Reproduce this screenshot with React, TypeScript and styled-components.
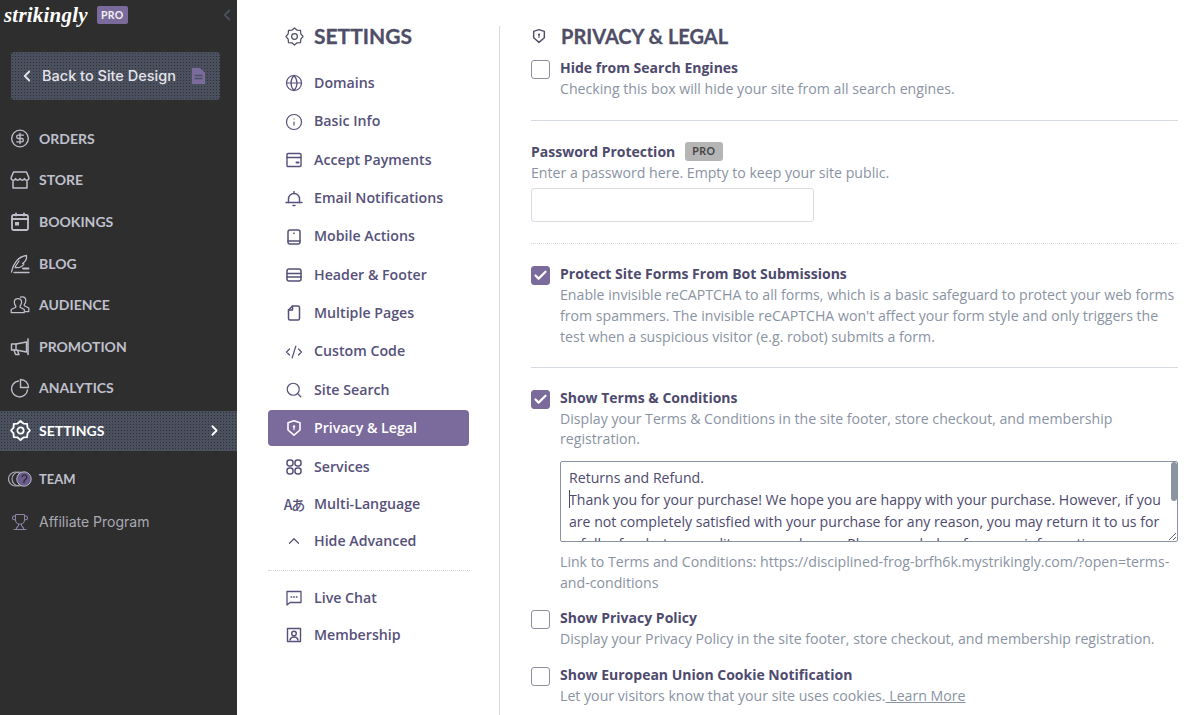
import React from "react";
import styled, { createGlobalStyle } from "styled-components";
import { ChevronLeft, ChevronRight, ChevronUp, CircleDollarSign, Trophy, Globe, Info, CodeXml, Search, Check } from "lucide-react";

const Global = createGlobalStyle`
  html, body { margin: 0; padding: 0; height: 100%; background: #fff; }
  body { font-family: "Open Sans", "Liberation Sans", sans-serif; overflow: hidden; }
  * { box-sizing: border-box; }
`;

const dots = `
  background-color: #4b505e;
  background-image: radial-gradient(#2f3138 0.6px, transparent 0.8px);
  background-size: 3px 3px;
`;

const Page = styled.div`display: flex; width: 1200px; height: 715px; overflow: hidden;`;
const Sidebar = styled.aside`width: 237px; flex: none; background: #2e2e2e; display: flex; flex-direction: column;`;
const LogoRow = styled.div`height: 52px; padding: 0 1px 22px 4px; display: flex; align-items: center; gap: 8px;`;
const Logo = styled.span`font: italic 700 21px/1 "Liberation Serif", serif; color: #fff; width: 85px; letter-spacing: 0.2px;`;
const ProTag = styled.span`background: #7b6b9d; color: #f0f0f0; font: 700 10.5px/1 "Lato", sans-serif; padding: 4px 4px; border-radius: 2px; letter-spacing: .3px;`;
const Collapse = styled.span`margin-left: auto; color: #4b505e; display: flex;`;
const BackButton = styled.div`
  ${dots}
  margin: 0 17px 0 11px; height: 48px; border-radius: 3px; display: flex; align-items: center;
  padding: 0 14px 0 7px; color: #e4e4ea; font: 500 14.5px/1 "Inter", sans-serif; gap: 6px;
  svg:last-child { margin-left: auto; color: #7b6b9d; }
`;
const MainNav = styled.nav`display: flex; flex-direction: column; margin-top: 18px;`;
const NavRow = styled.div<{ $active?: boolean }>`
  ${(p) => (p.$active ? dots : "")}
  height: ${(p) => (p.$active ? "40px" : "41.6px")};
  margin-top: ${(p) => (p.$active ? "1.4px" : "0")};
  display: flex; align-items: center; padding: 0 14px 0 10px; gap: 9px;
  color: ${(p) => (p.$active ? "#fff" : "#bfc0cc")};
  font: 700 14px/1 "Lato", sans-serif;
  svg:last-child:not(:first-child) { margin-left: auto; }
`;
const IconSlot = styled.span`width: 20px; display: flex; justify-content: center; flex: none;`;
const TeamRow = styled(NavRow)`margin-top: 8px; padding-left: 8px; gap: 7px; font-size: 13px;`;
const AffiliateRow = styled(NavRow)`font: 400 14px/1 "Inter", sans-serif; color: #a9a9b3; margin-top: 1px;`;

const SettingsCol = styled.div`
  width: 263px; flex: none; padding: 0 30px 0 31px; margin: 26px 0 0; border-right: 1px solid #d9d9de;
  display: flex; flex-direction: column;
`;
const SettingsTitle = styled.h2`
  margin: 0 0 19.2px; height: 20px; padding-left: 17px; display: flex; align-items: center; gap: 10px;
  font: 700 21px/20px "Lato", sans-serif; color: #4e4e68; -webkit-text-stroke: 0.3px #4e4e68;
`;
const SubNav = styled.nav`display: flex; flex-direction: column;`;
const SubRow = styled.div<{ $active?: boolean; $tight?: boolean }>`
  height: 36px; margin-bottom: ${(p) => (p.$tight ? "1px" : "2.35px")}; display: flex; align-items: center; gap: 10px; padding-left: 16px; border-radius: 4px;
  font: 600 14.2px/1 "Open Sans", sans-serif;
  background: ${(p) => (p.$active ? "#7b6b9d" : "transparent")};
  color: ${(p) => (p.$active ? "#fff" : "#56517a")};
`;
const LangGlyph = styled.span`font: 500 14px/1 "Noto Sans CJK JP", "Noto Sans", sans-serif; letter-spacing: -1px; white-space: nowrap;`;
const SubDivider = styled.div`border-top: 1px dotted #cfcfd4; margin: 10px -1px 9.5px 0;`;

const Content = styled.main`flex: 1; padding: 26px 22px 0 31px;`;
const ContentTitle = styled.h2`
  margin: 0 0 12px; height: 20px; display: flex; align-items: center; gap: 14px;
  font: 700 20px/20px "Lato", sans-serif; color: #4e4e68; -webkit-text-stroke: 0.3px #4e4e68;
`;
const OptionRow = styled.div<{ $top?: number }>`display: flex; gap: 10px; margin-top: ${(p) => p.$top ?? 0}px;`;
const Box = styled.span<{ $on?: boolean }>`
  width: 19px; height: 19px; margin-top: 2px; flex: none; border-radius: 3px; display: flex; align-items: center; justify-content: center; color: #fff;
  border: 1.5px solid ${(p) => (p.$on ? "#7b6b9d" : "#8f8f9d")};
  background: ${(p) => (p.$on ? "#7b6b9d" : "#fff")};
`;
const OptionBody = styled.div`flex: 1; min-width: 0;`;
const Title = styled.div`font: 700 14px/20px "Open Sans", sans-serif; color: #4e4a6e; margin-bottom: 1px;`;
const Desc = styled.div`font: 400 14.15px/20.7px "Open Sans", sans-serif; color: #8a93a3;`;
const LearnMore = styled.span`text-decoration: underline;`;
const Rule = styled.hr<{ $dotted?: boolean; $top: number; $bottom: number }>`
  border: 0; border-top: 1px ${(p) => (p.$dotted ? "dotted" : "solid")} #d5dae0;
  margin: ${(p) => p.$top}px 0 ${(p) => p.$bottom}px;
`;
const PassTitle = styled(Title)`display: flex; align-items: center; gap: 10px;`;
const GreyTag = styled.span`background: #b5b5b5; color: #444; font: 700 10.5px/1 "Lato", sans-serif; letter-spacing: .6px; padding: 4.5px 7px; border-radius: 3px;`;
const PassInput = styled.input`
  display: block; width: 283px; height: 34px; margin-top: 5px; border: 1.5px solid #d9dde2; border-radius: 3px; background: #fff; outline: none;
`;
const TermsWrap = styled.div`position: relative; margin: 11px 0 10px; width: 618px;`;
const Terms = styled.textarea`
  display: block; width: 618px; height: 81px; padding: 5px 15px 5px 8px; border: 1px solid #8993a0; border-radius: 2px; outline: none;
  resize: both; overflow: hidden; color: #4e4a6e;
  font: 400 14.12px/22px "Open Sans", sans-serif;
`;
const Caret = styled.span`position: absolute; left: 9px; top: 29px; width: 1px; height: 18px; background: #4e4a6e;`;
const Thumb = styled.span`position: absolute; right: 1px; top: 1px; width: 6px; height: 39px; background: #8b94a0; border-radius: 3px;`;

const gearPath = (() => {
  const pts: string[] = [];
  for (let i = 0; i < 16; i++) {
    const a = (i * Math.PI) / 8 - Math.PI / 2;
    const r = i % 2 === 0 ? 9 : 7.2;
    pts.push(`${(10 + r * Math.cos(a)).toFixed(2)} ${(10 + r * Math.sin(a)).toFixed(2)}`);
  }
  return "M" + pts.join("L") + "Z";
})();

type P = { size?: number; sw?: number };
const Svg = styled.svg`fill: none; stroke: currentColor; stroke-linejoin: round; stroke-linecap: round; flex: none;`;

const Gear = ({ size = 20, sw = 1.6 }: P) => (
  <Svg width={size} height={size} viewBox="0 0 20 20" strokeWidth={sw}><path d={gearPath} /><circle cx="10" cy="10" r="3" /></Svg>
);
const StoreIcon = () => (
  <Svg width="20" height="20" viewBox="0 0 20 20" strokeWidth={1.5}>
    <path d="M3.5 2h13L19 8a2.3 2.3 0 0 1-4.5.6 2.4 2.4 0 0 1-4.5 0 2.4 2.4 0 0 1-4.5 0A2.3 2.3 0 0 1 1 8z" /><path d="M3 11.5V18h14v-6.5" />
  </Svg>
);
const BookingsIcon = () => (
  <Svg width="20" height="20" viewBox="0 0 20 20" strokeWidth={1.8}>
    <rect x="2" y="3" width="16" height="15" rx="1.5" /><path d="M2 7h16M6 1.5v2M14 1.5v2" /><rect x="5" y="10" width="4" height="3.5" fill="currentColor" stroke="none" />
  </Svg>
);
const BlogIcon = () => (
  <Svg width="20" height="20" viewBox="0 0 20 20" strokeWidth={1.3}>
    <path d="M1.5 18C3 10 8 2.5 16.5 1.5 17 5 15 8 12.5 9.5L14 10c-2 3-5 4-8.5 3.5" /><path d="M5 13 9 7" /><path d="M4 18.5h15" /><path d="M13 14.5h5.5" strokeWidth={1.8} />
  </Svg>
);
const AudienceIcon = () => (
  <Svg width="20" height="20" viewBox="0 0 20 20" strokeWidth={1.25}>
    <path d="M8 3.5c2.2 0 3.6 1.700 3.6 3.800 0 1.700-.8 2.900-1.500 3.700v1.300l4.200 2.200v3H1.200v-3l4.600-2.200v-1.300C5 10.200 4.300 9 4.300 7.300 4.300 5.200 5.800 3.500 8 3.500z" />
    <path d="M10.500 2.200C11 2 11.600 1.900 12.200 1.900c2.200 0 3.600 1.700 3.600 3.800 0 1.700-.8 2.900-1.500 3.700v1.300l4.500 2.300v3.500h-3.500" />
  </Svg>
);
const PromotionIcon = () => (
  <Svg width="20" height="20" viewBox="0 0 20 20" strokeWidth={1.4}>
    <path d="M16.500 5 6 7H1.500v6H6l10.500 2z" /><path d="M18 2v15.500" strokeWidth={1.6} /><path d="M4 13l1.500 4.500H9L7.500 13.500" /><path d="M6 7v6" />
  </Svg>
);
const AnalyticsIcon = () => (
  <Svg width="20" height="20" viewBox="0 0 20 20" strokeWidth={1.4}>
    <path d="M8.500 3A8 8 0 1 0 17.500 12" /><path d="M10.500 1.500A8 8 0 0 1 18.500 9.500H10.500z" />
  </Svg>
);
const DocIcon = () => (
  <svg width="16" height="18" viewBox="0 0 16 18" fill="currentColor">
    <path d="M2 1h8l5 4.500V17H2z" /><path d="M4.500 8.500h8M4.500 11.500h8" stroke="#4b505e" strokeWidth="1.300" />
  </svg>
);
const TeamIcon = () => (
  <svg width="24" height="16" viewBox="0 0 24 16">
    <circle cx="7.500" cy="8" r="7" fill="none" stroke="#a9a9b8" strokeWidth="1.200" />
    <circle cx="11" cy="8" r="7" fill="none" stroke="#a9a9b8" strokeWidth="1.200" />
    <circle cx="16" cy="8" r="7.200" fill="#6a5c8c" stroke="#b9b9c6" strokeWidth="1" />
    <path d="M14 6a2.400 2.400 0 1 1 3.400 2.400L16 10v2" stroke="#2e2e2e" strokeWidth="1.300" fill="none" />
  </svg>
);

const Wallet = () => (
  <Svg width="18" height="18" viewBox="0 0 18 18" strokeWidth={1.4}>
    <rect x="2" y="2.500" width="14" height="13" rx="1" /><path d="M2 6.500h14" /><path d="M11.500 11.500h2" strokeWidth={2} />
  </Svg>
);
const BellIcon = () => (
  <Svg width="18" height="18" viewBox="0 0 18 18" strokeWidth={1.4}>
    <path d="M3.500 13.500V10a5.500 5.500 0 0 1 11 0v3.500" /><path d="M1 13.500h16" /><path d="M8 16.500h2M9 2.500v2" />
  </Svg>
);
const Phone = () => (
  <Svg width="18" height="18" viewBox="0 0 18 18" strokeWidth={1.5}>
    <rect x="3" y="2" width="12" height="14" rx="2" /><path d="M3 13h12" /><path d="M9 5v.6" />
  </Svg>
);
const HeaderFooter = () => (
  <Svg width="18" height="18" viewBox="0 0 18 18" strokeWidth={1.5}>
    <rect x="2" y="3" width="14" height="12" rx="2" /><path d="M2 7.500h14M2 11h14" />
  </Svg>
);
const PageIcon = () => (
  <Svg width="18" height="18" viewBox="0 0 18 18" strokeWidth={1.5}>
    <path d="M7.500 2H13a1.500 1.500 0 0 1 1.500 1.500v11A1.500 1.500 0 0 1 13 16H5a1.500 1.500 0 0 1-1.500-1.500V6z" /><path d="M7.500 2v4h-4" />
  </Svg>
);
const Shield = ({ size = 18 }: { size?: number }) => (
  <Svg width={size} height={size} viewBox="0 0 18 18" strokeWidth={1.6}>
    <path d="M9 1.800l6 2v7.200L9 16.200 3 11V3.800z" /><circle cx="9" cy="7.400" r="1.200" fill="currentColor" stroke="none" /><path d="M9 8v2.600" strokeWidth={1.200} />
  </Svg>
);
const Squares = () => (
  <Svg width="18" height="18" viewBox="0 0 18 18" strokeWidth={1.5}>
    <rect x="2" y="2" width="6" height="6" rx="2.400" /><rect x="10" y="2" width="6" height="6" rx="2.400" />
    <rect x="2" y="10" width="6" height="6" rx="2.400" /><rect x="10" y="10" width="6" height="6" rx="2.400" />
  </Svg>
);
const ChatIcon = () => (
  <Svg width="18" height="18" viewBox="0 0 18 18" strokeWidth={1.3}>
    <path d="M2 2.500h14v11H5L2 16z" /><path d="M6 8h.6M8.700 8h.6M11.400 8h.6" strokeWidth={1.500} />
  </Svg>
);
const MemberIcon = () => (
  <Svg width="18" height="18" viewBox="0 0 18 18" strokeWidth={1.400}>
    <rect x="2.500" y="2.500" width="13" height="13" /><circle cx="9" cy="7.500" r="2.300" /><path d="M5 14c.5-2.300 2-3 4-3s3.500.7 4 3" />
  </Svg>
);

const mainItems = [
  { label: "ORDERS", icon: <CircleDollarSign size={21} strokeWidth={1.6} /> },
  { label: "STORE", icon: <StoreIcon /> },
  { label: "BOOKINGS", icon: <BookingsIcon /> },
  { label: "BLOG", icon: <BlogIcon /> },
  { label: "AUDIENCE", icon: <AudienceIcon /> },
  { label: "PROMOTION", icon: <PromotionIcon /> },
  { label: "ANALYTICS", icon: <AnalyticsIcon /> },
];

const s = 1.6;
const subItems: { label: string; icon: React.ReactNode; active?: boolean; tight?: boolean }[] = [
  { label: "Domains", icon: <Globe size={18} strokeWidth={s} /> },
  { label: "Basic Info", icon: <Info size={18} strokeWidth={s} /> },
  { label: "Accept Payments", icon: <Wallet /> },
  { label: "Email Notifications", icon: <BellIcon /> },
  { label: "Mobile Actions", icon: <Phone /> },
  { label: "Header & Footer", icon: <HeaderFooter /> },
  { label: "Multiple Pages", icon: <PageIcon /> },
  { label: "Custom Code", icon: <CodeXml size={18} strokeWidth={s} /> },
  { label: "Site Search", icon: <Search size={18} strokeWidth={s} /> },
  { label: "Privacy & Legal", icon: <Shield />, active: true },
  { label: "Services", icon: <Squares />, tight: true },
  { label: "Multi-Language", icon: <LangGlyph>Aあ</LangGlyph>, tight: true },
  { label: "Hide Advanced", icon: <ChevronUp size={18} strokeWidth={s} />, tight: true },
];

const termsText = `Returns and Refund.
Thank you for your purchase! We hope you are happy with your purchase. However, if you are not completely satisfied with your purchase for any reason, you may return it to us for a full refund, store credit, or an exchange. Please see below for more information on our return policy.`;

export default function App() {
  return (
    <Page>
      <Global />
      <Sidebar>
        <LogoRow>
          <Logo>strikingly</Logo>
          <ProTag>PRO</ProTag>
          <Collapse><ChevronLeft size={18} strokeWidth={2.5} /></Collapse>
        </LogoRow>
        <BackButton>
          <ChevronLeft size={18} strokeWidth={2.5} />
          <span>Back to Site Design</span>
          <DocIcon />
        </BackButton>
        <MainNav>
          {mainItems.map((m) => (
            <NavRow key={m.label}><IconSlot>{m.icon}</IconSlot><span>{m.label}</span></NavRow>
          ))}
          <NavRow $active>
            <IconSlot><Gear size={21} sw={1.7} /></IconSlot><span>SETTINGS</span>
            <ChevronRight size={17} strokeWidth={2.5} />
          </NavRow>
          <TeamRow><TeamIcon /><span>TEAM</span></TeamRow>
          <AffiliateRow><IconSlot><Trophy size={18} strokeWidth={1.4} color="#8f84a8" /></IconSlot><span>Affiliate Program</span></AffiliateRow>
        </MainNav>
      </Sidebar>

      <SettingsCol>
        <SettingsTitle><Gear size={19} sw={1.3} />SETTINGS</SettingsTitle>
        <SubNav>
          {subItems.map((i) => (
            <SubRow key={i.label} $active={i.active} $tight={i.tight}><IconSlot>{i.icon}</IconSlot><span>{i.label}</span></SubRow>
          ))}
        </SubNav>
        <SubDivider />
        <SubNav>
          <SubRow $tight><IconSlot><ChatIcon /></IconSlot><span>Live Chat</span></SubRow>
          <SubRow $tight><IconSlot><MemberIcon /></IconSlot><span>Membership</span></SubRow>
        </SubNav>
      </SettingsCol>

      <Content>
        <ContentTitle><Shield size={16} />PRIVACY &amp; LEGAL</ContentTitle>
        <OptionRow>
          <Box />
          <OptionBody>
            <Title>Hide from Search Engines</Title>
            <Desc>Checking this box will hide your site from all search engines.</Desc>
          </OptionBody>
        </OptionRow>
        <Rule $top={20} $bottom={21} />
        <PassTitle>Password Protection <GreyTag>PRO</GreyTag></PassTitle>
        <Desc>Enter a password here. Empty to keep your site public.</Desc>
        <PassInput aria-label="Password" />
        <Rule $dotted $top={21} $bottom={20} />
        <OptionRow>
          <Box $on><Check size={15} strokeWidth={3.5} /></Box>
          <OptionBody>
            <Title>Protect Site Forms From Bot Submissions</Title>
            <Desc>Enable invisible reCAPTCHA to all forms, which is a basic safeguard to protect your web forms from spammers. The invisible reCAPTCHA won't affect your form style and only triggers the test when a suspicious visitor (e.g. robot) submits a form.</Desc>
          </OptionBody>
        </OptionRow>
        <Rule $top={19} $bottom={20} />
        <OptionRow>
          <Box $on><Check size={15} strokeWidth={3.5} /></Box>
          <OptionBody>
            <Title>Show Terms &amp; Conditions</Title>
            <Desc>Display your Terms &amp; Conditions in the site footer, store checkout, and membership registration.</Desc>
            <TermsWrap>
              <Terms readOnly value={termsText} />
              <Caret />
              <Thumb />
            </TermsWrap>
            <Desc>Link to Terms and Conditions: https://disciplined-frog-brfh6k.mystrikingly.com/?open=terms-and-conditions</Desc>
          </OptionBody>
        </OptionRow>
        <OptionRow $top={15}>
          <Box />
          <OptionBody>
            <Title>Show Privacy Policy</Title>
            <Desc>Display your Privacy Policy in the site footer, store checkout, and membership registration.</Desc>
          </OptionBody>
        </OptionRow>
        <OptionRow $top={15}>
          <Box />
          <OptionBody>
            <Title>Show European Union Cookie Notification</Title>
            <Desc>Let your visitors know that your site uses cookies.<LearnMore> Learn More</LearnMore></Desc>
          </OptionBody>
        </OptionRow>
      </Content>
    </Page>
  );
}
